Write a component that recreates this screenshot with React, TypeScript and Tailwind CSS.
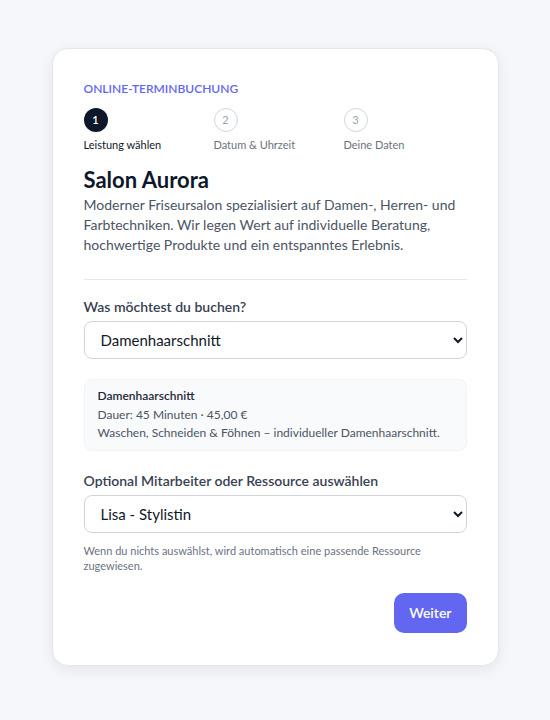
const steps = [
  { n: 1, label: 'Leistung wählen', active: true },
  { n: 2, label: 'Datum & Uhrzeit', active: false },
  { n: 3, label: 'Deine Daten', active: false },
];

const App = () => {
  return (
    <div className="min-h-[720px] bg-[#f6f7fb] pt-[48px] pb-[56px] font-['Lato',sans-serif]">
      <div className="mx-auto w-[447px] rounded-2xl border border-[#e5e7eb] bg-white px-[31px] py-8 shadow-[0_4px_14px_rgba(15,23,42,0.08)]">
        <div className="text-[12px] font-semibold leading-4 text-[#6366f1]">ONLINE-TERMINBUCHUNG</div>

        <div className="mt-[11px] flex overflow-hidden">
          {steps.map((s) => (
            <div key={s.n} className="w-[130px] shrink-0">
              <div
                className={
                  s.active
                    ? 'flex h-6 w-6 items-center justify-center rounded-full bg-[#0f172a] text-[11px] font-semibold text-white'
                    : 'flex h-6 w-6 items-center justify-center rounded-full border border-[#d1d5db] bg-white text-[11px] text-[#9ca3af]'
                }
              >
                {s.n}
              </div>
              <div className={s.active ? 'mt-[5px] text-[11px] leading-4 text-[#111827]' : 'mt-[5px] text-[11px] leading-4 text-[#6b7280]'}>
                {s.label}
              </div>
            </div>
          ))}
        </div>

        <h1 className="mt-[13px] text-[22px] font-bold leading-7 text-[#0f172a]">Salon Aurora</h1>
        <p className="mt-px text-[14px] leading-5 text-[#4b5563]">
          Moderner Friseursalon spezialisiert auf Damen-, Herren- und Farbtechniken. Wir legen Wert auf individuelle Beratung, hochwertige Produkte und ein entspanntes Erlebnis.
        </p>

        <div className="mt-6 border-t border-[#e5e7eb]" />

        <label className="mt-[17px] block text-[14px] font-semibold leading-5 text-[#374151]">Was möchtest du buchen?</label>
        <select className="mt-1 h-[38px] w-full rounded-lg border border-[#d1d5db] bg-white px-3 text-[15px] text-[#111827]">
          <option>Damenhaarschnitt</option>
        </select>

        <div className="mt-5 rounded-lg border border-[#f1f5f9] bg-[#f8fafc] px-[13px] py-[7px] text-[12px] leading-[18.5px]">
          <div className="font-semibold text-[#1f2937]">Damenhaarschnitt</div>
          <div className="text-[#4b5563]">Dauer: 45 Minuten · 45,00 €</div>
          <div className="text-[#4b5563]">Waschen, Schneiden &amp; Föhnen – individueller Damenhaarschnitt.</div>
        </div>

        <label className="mt-5 block text-[14px] font-semibold leading-5 text-[#374151]">Optional Mitarbeiter oder Ressource auswählen</label>
        <select className="mt-1 h-[38px] w-full rounded-lg border border-[#d1d5db] bg-white px-3 text-[15px] text-[#111827]">
          <option>Lisa - Stylistin</option>
        </select>
        <p className="mt-[10px] text-[11px] leading-[15px] text-[#6b7280]">
          Wenn du nichts auswählst, wird automatisch eine passende Ressource zugewiesen.
        </p>

        <div className="mt-5 flex justify-end">
          <button className="h-10 rounded-[10px] bg-[#6366f1] px-[15px] text-[14px] font-semibold text-white">Weiter</button>
        </div>
      </div>
    </div>
  );
};

export default App;
